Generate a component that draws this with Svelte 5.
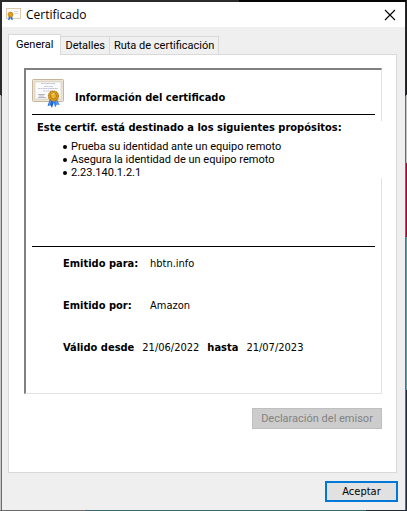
<script>
  const tabs = ['General', 'Detalles', 'Ruta de certificación'];
  let active = $state(0);
  const purposes = [
    'Prueba su identidad ante un equipo remoto',
    'Asegura la identidad de un equipo remoto',
    '2.23.140.1.2.1'
  ];
</script>

{#snippet largeCertificate()}
  <svg class="large" viewBox="0 0 32 30" aria-hidden="true">
    <rect x="0.5" y="1.5" width="31" height="22" rx="1" fill="#e6dccb" stroke="#c6b69c" />
    <rect x="1.5" y="2.5" width="29" height="20" fill="none" stroke="#f4eee2" stroke-dasharray="1 1" />
    <rect x="3" y="4" width="26" height="17" fill="#fbfbfc" stroke="#d8d0c4" stroke-width="0.6" />
    <path d="M9 5.500h14M12 8.500h9M6 10.500h20M11 13h10" stroke="#b4b8d2" stroke-width="0.8" stroke-dasharray="2 0.4" />
    <path d="M6 16.500h7M6 19.500h8M7 18h5" stroke="#a2a6b2" stroke-width="0.8" />
    <path d="M18 21l-2.500 7 3-.7L20 30l2-6z" fill="#1e65d6" />
    <path d="M25 21l2.600 6-2.800-.4L23.200 29.500l-2-6z" fill="#3c82ec" />
    <path d="M18.500 23l-1 4M24 23l1.500 3" stroke="#7db1fa" stroke-width="0.8" />
    <circle cx="21.500" cy="18" r="5" fill="#dda01c" stroke="#b9780b" stroke-width="1.200" stroke-dasharray="1.600 0.500" />
    <circle cx="21.500" cy="18" r="3" fill="#e9b52f" stroke="#a86d08" stroke-width="0.8" />
    <path d="M19.500 17q1-2 3-1.500" fill="none" stroke="#fff0a0" />
  </svg>
{/snippet}

{#snippet smallCertificate()}
  <svg class="small" viewBox="0 0 15 13" aria-hidden="true">
    <rect x="0.5" y="0.500" width="14" height="10" fill="#fcfbf9" stroke="#dccbb0" />
    <path d="M8 3.500h4M8 5.500h4" stroke="#dcdde4" />
    <path d="M3 8L2 12l2-.5L5 9zM6 8l1 4-2-.5V9z" fill="#2b75e2" />
    <circle cx="4.500" cy="6.500" r="2.500" fill="#dc9f1b" stroke="#b9780b" stroke-width="0.6" />
  </svg>
{/snippet}

<div class="desktop">
  <main class="window">
    <header class="titlebar">
      {@render smallCertificate()}
      <h1>Certificado</h1>
      <button class="close" aria-label="Cerrar">
        <svg viewBox="0 0 10 10" aria-hidden="true"><path d="M0 0L10 10M10 0L0 10" /></svg>
      </button>
    </header>

    <div class="body">
      <div class="tabs" role="tablist">
        {#each tabs as tab, i}
          <button role="tab" aria-selected={active === i} class:active={active === i} onclick={() => (active = i)}>{tab}</button>
        {/each}
      </div>

      <section class="panel" role="tabpanel">
        <div class="sheet">
          <div class="intro">
            {@render largeCertificate()}
            <h2>Información del certificado</h2>
          </div>
          <div class="purposes">
            <h3>Este certif. está destinado a los siguientes propósitos:</h3>
            <ul>
              {#each purposes as purpose}
                <li>{purpose}</li>
              {/each}
            </ul>
          </div>
          <dl class="details">
            <div><dt>Emitido para:</dt><dd>hbtn.info</dd></div>
            <div><dt>Emitido por:</dt><dd>Amazon</dd></div>
            <div class="dates"><dt>Válido desde</dt><dd>21/06/2022</dd><dt>hasta</dt><dd>21/07/2023</dd></div>
          </dl>
        </div>
        <button class="statement" disabled>Declaración del emisor</button>
      </section>

      <footer><button class="accept">Aceptar</button></footer>
    </div>
  </main>
</div>

<style>
  :global(body) { margin: 0; }
  .desktop {
    box-sizing: border-box;
    min-height: 100vh;
    padding: 2px 1px 1px;
    display: flex;
    background:
      linear-gradient(90deg, #6b6b6b 85px, #35686c 85px 366px, #1f2b38 366px) bottom / 100% 1px no-repeat,
      linear-gradient(#1c1c1f 95px, #c4c4c4 95px 163px, #b0003c 163px 237px, #5a9fa3 237px 390px, #1f2b38 390px) right / 1px 100% no-repeat,
      linear-gradient(#2b2a2c 95px, #c8c8c8 95px) left / 1px 100% no-repeat,
      linear-gradient(90deg, #2b2a2c 239px, #050505 239px);
    font: 11px/13px "DejaVu Sans Condensed", "DejaVu Sans", sans-serif;
    font-stretch: condensed;
    color: #000;
  }
  .window {
    flex: 1;
    display: flex;
    flex-direction: column;
    background: #efefef;
    border: solid #6b6b6b;
    border-image: linear-gradient(#2b2a2c 95px, #6b6b6b 95px) 1;
    border-width: 0 1px;
  }
  .titlebar {
    height: 25px;
    display: flex;
    align-items: center;
    background: #fff;
    padding: 0 8px 0 4px;
  }
  .small { width: 15px; height: 13px; }
  .large { width: 32px; height: 30px; }
  h1, h2, h3 { margin: 0; font-size: 11px; }
  h1 {
    flex: 1;
    margin-left: 5px;
    font: 12px/16px "Open Sans", sans-serif;
  }
  button { font: inherit; color: inherit; padding: 0; }
  .tabs button, li, .statement {
    font-family: Roboto, sans-serif;
    font-stretch: normal;
  }
  .close { border: 0; background: none; width: 14px; height: 14px; display: grid; place-items: center; }
  .close svg { width: 10px; height: 10px; overflow: visible; }
  .close path { stroke: #000; stroke-width: 1.1; }
  .body { flex: 1; display: flex; flex-direction: column; padding: 7px 8px 8px 6px; }
  .tabs { display: flex; align-items: flex-end; height: 20px; }
  .tabs button {
    height: 18px;
    padding: 0 4px 1px;
    background: #f0f0f0;
    border: 1px solid #d9d9d9;
    border-width: 1px 1px 0 0;
  }
  .tabs .active {
    height: 21px;
    margin-bottom: -1px;
    padding: 0 7px 2px;
    background: #fff;
    border-left-width: 1px;
    z-index: 1;
  }
  .panel {
    flex: 1;
    display: flex;
    flex-direction: column;
    padding: 13px 14px 14px 15px;
    background: #fff;
    border: 1px solid #d9d9d9;
  }
  .sheet {
    min-height: 323px;
    border: 1px solid #e3e3e3;
    border-top: 2px solid #808080;
    border-left: 2px solid #808080;
  }
  .intro {
    height: 44px;
    margin: 0 6px;
    display: flex;
    align-items: center;
    border-bottom: 1px solid #000;
  }
  .intro .large { margin-top: 2px; }
  .intro h2 { margin: 10px 0 0 11px; }
  .purposes {
    box-sizing: border-box;
    height: 57px;
    margin: 6px -1px 0 0;
    padding-left: 11px;
    background: #fff;
    position: relative;
  }
  ul { list-style: none; margin: 0; padding: 6px 0 0 26px; }
  li { display: flex; align-items: center; gap: 4px; }
  li::before { content: ""; width: 4px; height: 4px; border-radius: 50%; background: #000; }
  .details {
    margin: 68px 6px 0;
    padding: 10px 0 0 31px;
    border-top: 1px solid #000;
  }
  .details div { display: flex; height: 42px; }
  dt { font-weight: bold; width: 87px; white-space: nowrap; }
  dd { margin: 0; }
  .details .dates { gap: 8px; height: 36px; }
  .dates dt { width: auto; }
  .statement {
    align-self: flex-end;
    box-sizing: border-box;
    width: 130px;
    height: 21px;
    margin-top: 14px;
    background: #ccc;
    border: 1px solid #bfbfbf;
    color: #838383;
    white-space: nowrap;
  }
  footer { display: flex; justify-content: flex-end; padding-top: 8px; margin-right: -1px; }
  .accept {
    box-sizing: border-box;
    width: 73px;
    height: 21px;
    background: #e1e1e1;
    border: 2px solid #0078d7;
  }
</style>
